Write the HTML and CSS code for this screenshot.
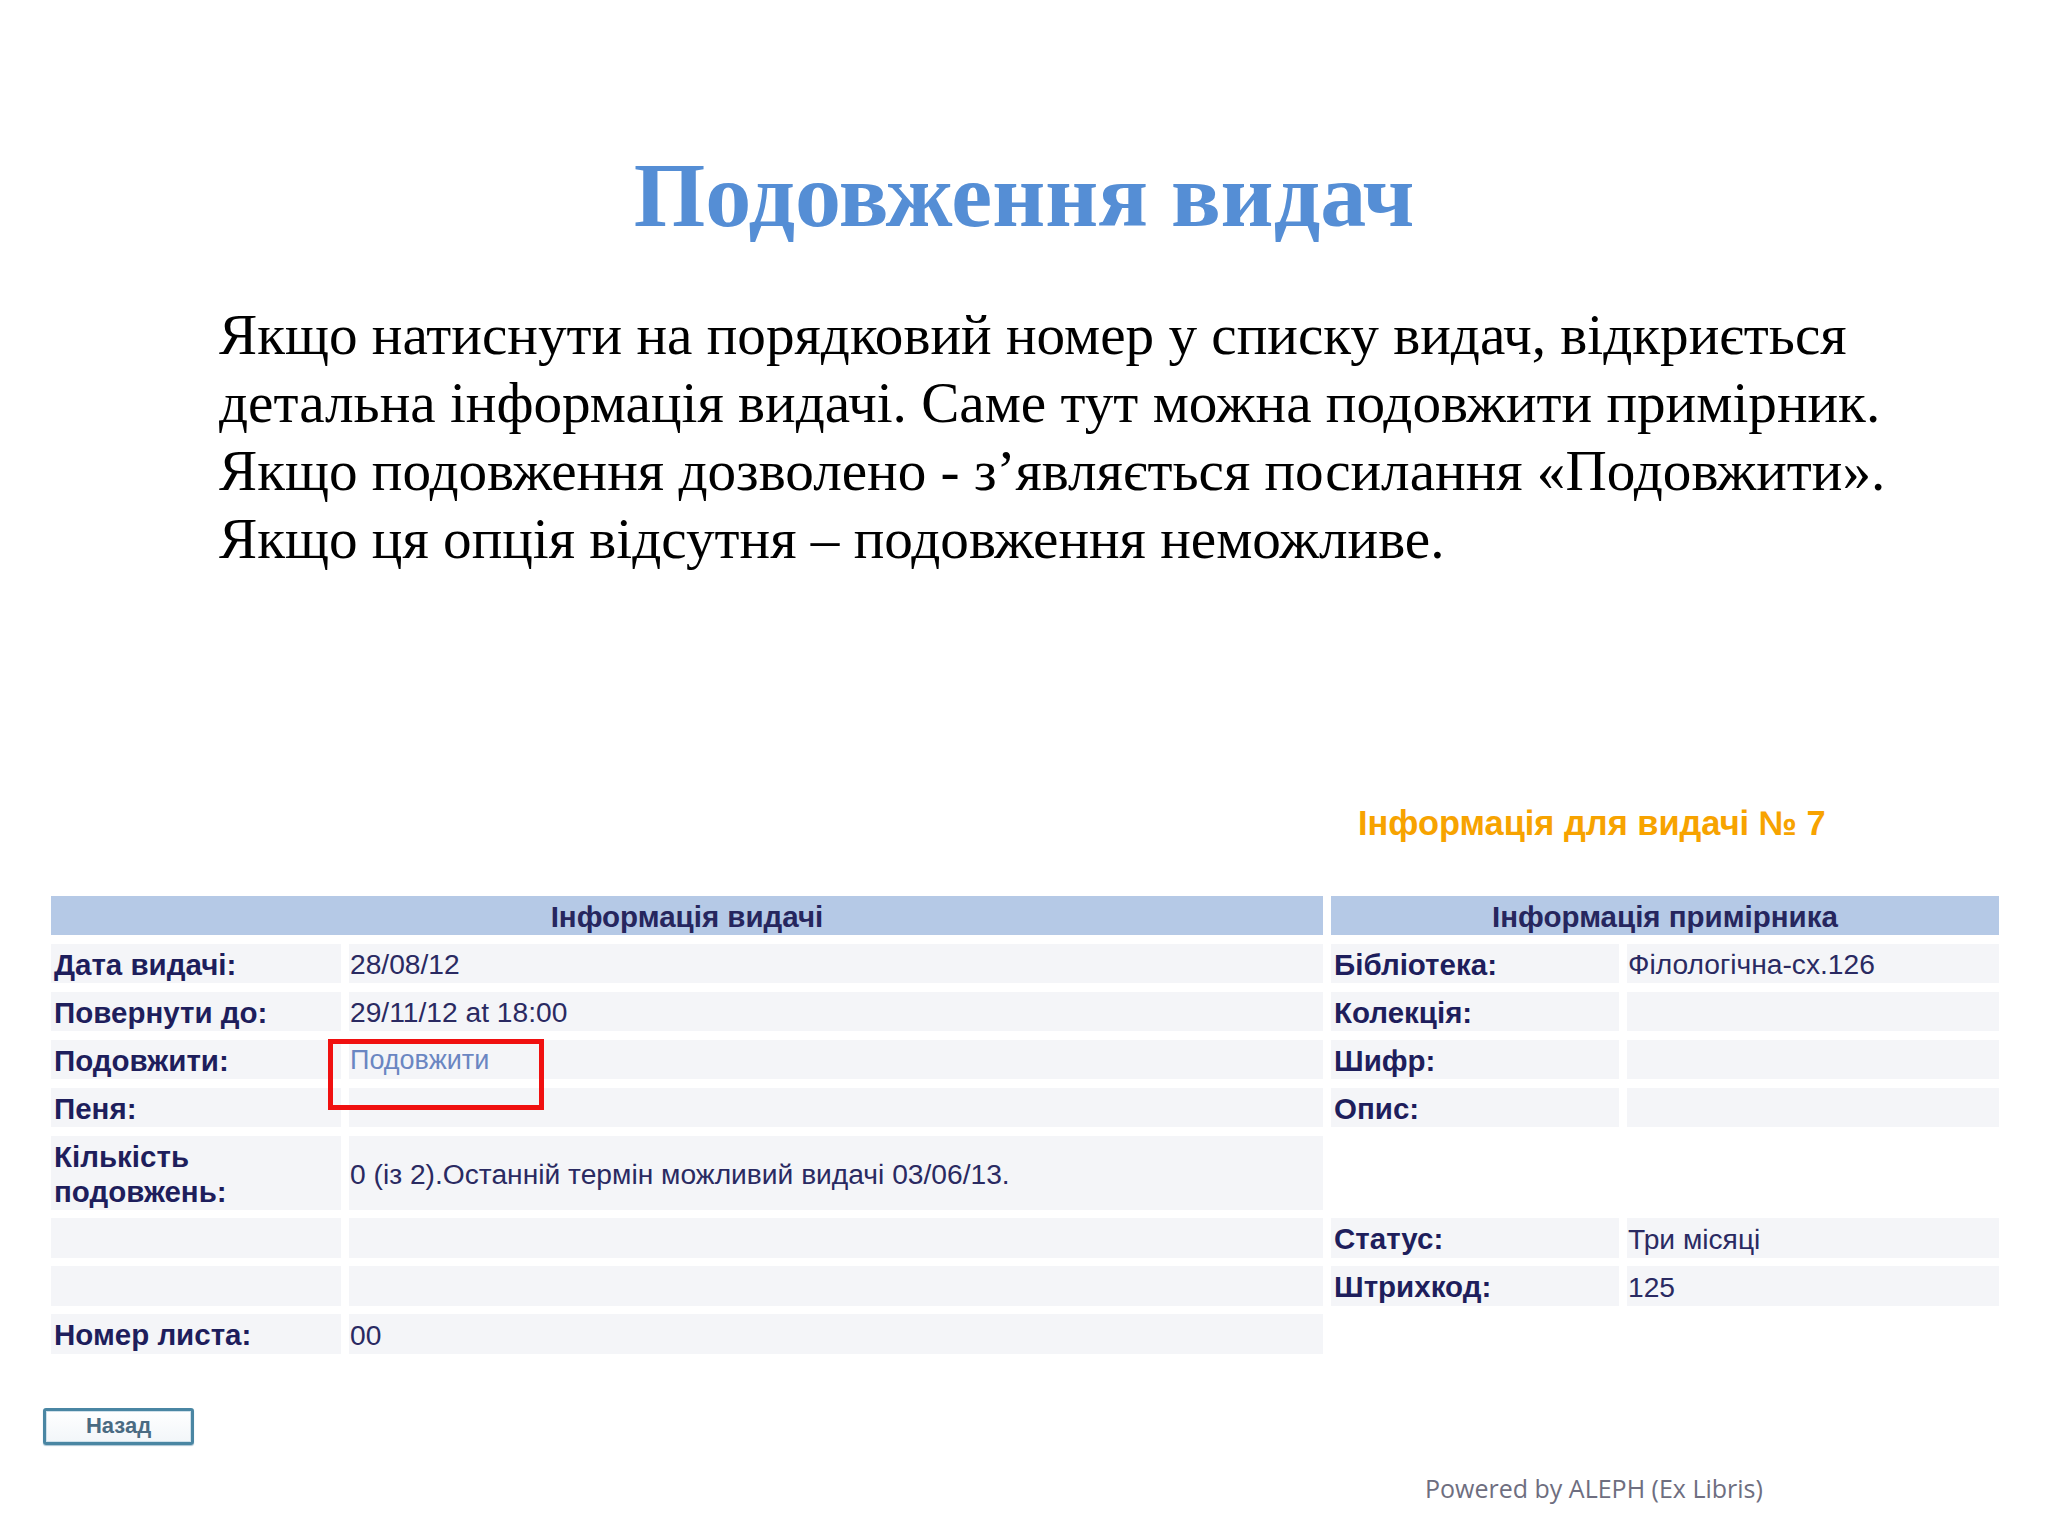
FILE: index.html
```html
<!DOCTYPE html>
<html lang="uk">
<head>
<meta charset="utf-8">
<title>Подовження видач</title>
<link rel="stylesheet" href="styles.css">
</head>
<body>
<div class="slide">
  <h1 class="title">Подовження видач</h1>
  <p class="lead">Якщо натиснути на порядковий номер у списку видач, відкриється<br>детальна інформація видачі. Саме тут можна подовжити примірник.<br>Якщо подовження дозволено - з’являється посилання «Подовжити».<br>Якщо ця опція відсутня – подовження неможливе.</p>

  <div class="opac">
    <h2 class="loan-title">Інформація для видачі № 7</h2>
    <div class="grid">
      <div class="head head-left">Інформація видачі</div>
      <div class="head head-right">Інформація примірника</div>

      <div class="cell label">Дата видачі:</div>
      <div class="cell value">28/08/12</div>
      <div class="cell label">Бібліотека:</div>
      <div class="cell value">Філологічна-сх.126</div>

      <div class="cell label">Повернути до:</div>
      <div class="cell value">29/11/12 at 18:00</div>
      <div class="cell label">Колекція:</div>
      <div class="cell value"></div>

      <div class="cell label">Подовжити:</div>
      <div class="cell value marked"><a class="link" href="#">Подовжити</a><span class="highlight"></span></div>
      <div class="cell label">Шифр:</div>
      <div class="cell value"></div>

      <div class="cell label">Пеня:</div>
      <div class="cell value"></div>
      <div class="cell label">Опис:</div>
      <div class="cell value"></div>

      <div class="cell label two-line">Кількість<br>подовжень:</div>
      <div class="cell value">0 (із 2).Останній термін можливий видачі 03/06/13.</div>
      <div class="cell blank"></div>
      <div class="cell blank"></div>

      <div class="cell label"></div>
      <div class="cell value"></div>
      <div class="cell label">Статус:</div>
      <div class="cell value">Три місяці</div>

      <div class="cell label"></div>
      <div class="cell value"></div>
      <div class="cell label">Штрихкод:</div>
      <div class="cell value">125</div>

      <div class="cell label">Номер листа:</div>
      <div class="cell value">00</div>
      <div class="cell blank"></div>
      <div class="cell blank"></div>
    </div>

    <button class="back" type="button">Назад</button>
    <div class="powered">Powered by ALEPH (Ex Libris)</div>
  </div>
</div>
</body>
</html>
```

FILE: styles.css
```css
html, body {
  margin: 0;
  padding: 0;
  background: #ffffff;
}

.slide {
  width: 2048px;
  height: 1536px;
  overflow: hidden;
  position: relative;
}

.title {
  margin: 149px 0 0 0;
  font-family: "Liberation Serif", "Times New Roman", serif;
  font-weight: bold;
  font-size: 92px;
  line-height: 92px;
  color: #558ed5;
  text-align: center;
}

.lead {
  margin: 60px 0 0 219px;
  font-family: "Liberation Serif", "Times New Roman", serif;
  font-size: 57.2px;
  line-height: 68px;
  color: #000000;
}

.opac {
  font-family: "Liberation Sans", Arial, sans-serif;
}

.loan-title {
  margin: 230px 0 0 1358px;
  font-size: 34.4px;
  line-height: 40px;
  font-weight: bold;
  color: #f7a300;
}

.grid {
  margin: 53px 0 0 51px;
  display: grid;
  grid-template-columns: 290px 974px 288px 372px;
  grid-template-rows: 39px repeat(4, 39.5px) 74px repeat(3, 39.5px);
  column-gap: 8px;
  row-gap: 8.5px;
  font-size: 28.2px;
}

.head {
  background: #b5c9e6;
  color: #26265e;
  font-weight: bold;
  font-size: 29.5px;
  display: flex;
  align-items: center;
  justify-content: center;
  padding-top: 2px;
}

.head-left { grid-column: 1 / 3; }
.head-right { grid-column: 3 / 5; }

.cell {
  background: #f4f5f8;
  display: flex;
  align-items: center;
  padding-left: 3px;
  padding-top: 3px;
  white-space: nowrap;
}

.cell.blank { background: transparent; }

.label {
  font-weight: bold;
  font-size: 29.5px;
  color: #1e1e5c;
}

.two-line {
  line-height: 35px;
  white-space: normal;
}

.value {
  color: #2a2a62;
  padding-left: 1px;
}

.marked {
  position: relative;
}

.link {
  color: #6a86c2;
  font-size: 27px;
  text-decoration: none;
}

.highlight {
  position: absolute;
  left: -21px;
  top: -0.5px;
  width: 206px;
  height: 61px;
  border: 5px solid #f01010;
}

.back {
  display: block;
  margin: 54px 0 0 43px;
  width: 151px;
  height: 37px;
  padding: 0;
  border: 3px solid #4a86a3;
  border-radius: 3px;
  background: linear-gradient(#ffffff, #f2f6f9);
  box-shadow: inset 0 0 0 1px #cfe0ea, 0 1px 1px #a9c4d3;
  font-family: "Liberation Sans", Arial, sans-serif;
  font-size: 22px;
  font-weight: bold;
  color: #4a6b82;
}

.powered {
  margin: 26px 0 0 1425px;
  font-family: "Open Sans", "DejaVu Sans", sans-serif;
  font-size: 25px;
  line-height: 34px;
  color: #6e6e80;
}
```
